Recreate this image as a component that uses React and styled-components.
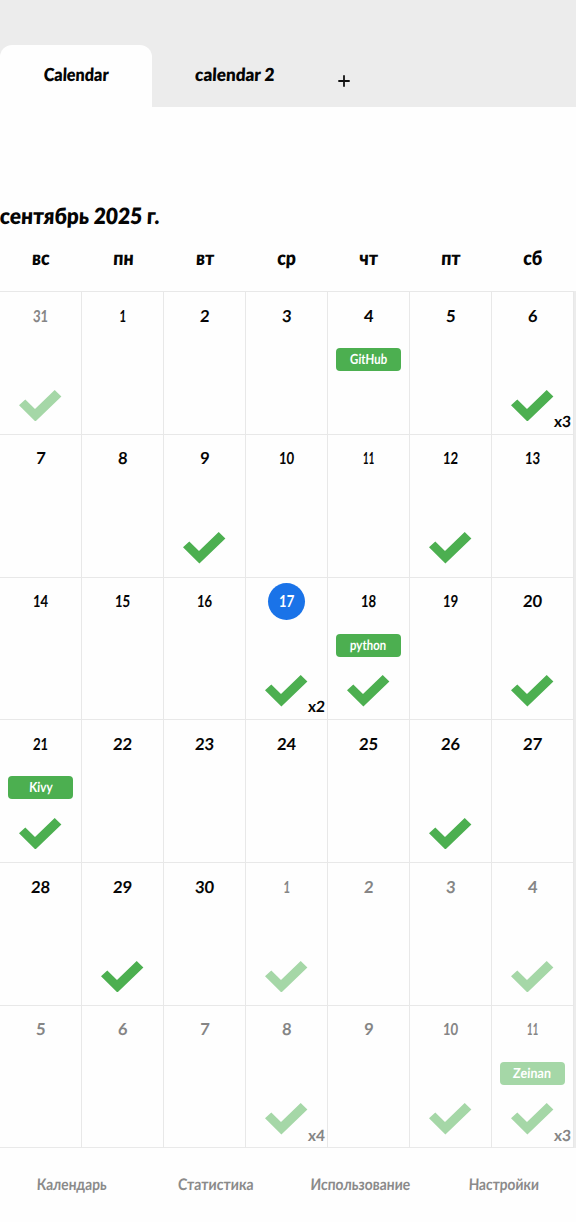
import React from "react";
import styled, { createGlobalStyle } from "styled-components";

const Global = createGlobalStyle`
  *, *::before, *::after { box-sizing: border-box; }
  body { margin: 0; background: #fff; }
`;

const Screen = styled.main`
  width: 576px;
  height: 1222px;
  overflow: hidden;
  display: flex;
  flex-direction: column;
  background: #fefefe;
  color: #050505;
  font-family: Lato, "Noto Sans", sans-serif;
  font-weight: 700;
`;

const Lettering = styled.span`
  display: inline-block;
  white-space: nowrap;
  transform: scaleX(${(p) => p.$stretch || 1}) skewX(-3deg);
  transform-origin: ${(p) => p.$origin || "center"};
`;

const TabBar = styled.header`
  flex: none;
  height: 107px;
  padding-top: 45px;
  display: flex;
  background: #ececec;
`;

const Tab = styled.div`
  width: ${(p) => p.$width}px;
  height: 62px;
  display: flex;
  justify-content: center;
  line-height: 58px;
  font-size: 18px;
  font-weight: 800;
  border-radius: 12px 12px 0 0;
  background: ${(p) => (p.$active ? "#fefefe" : "transparent")};
`;

const AddButton = styled.div`
  width: 52px;
  height: 62px;
  display: flex;
  align-items: center;
  justify-content: center;
  padding-top: 10px;
`;

const Title = styled.h1`
  flex: none;
  margin: 94px 0 0;
  height: 30px;
  line-height: 30px;
  font-size: 22.5px;
  font-weight: 800;
`;

const Weekdays = styled.div`
  flex: none;
  height: 60px;
  display: grid;
  grid-template-columns: repeat(7, 82px);
  text-align: center;
  font-size: 20px;
  font-weight: 800;
  line-height: 52px;
`;

const Month = styled.section`
  flex: none;
  height: 857px;
  display: grid;
  grid-template-columns: repeat(7, 82px) 3px;
  grid-template-rows: repeat(6, 142.75px);
  border-bottom: 1px solid #e9e9e9;
`;

const Edge = styled.div`
  grid-column: 8;
  grid-row: 1 / -1;
  background: #ececec;
`;

const Cell = styled.div`
  position: relative;
  display: flex;
  flex-direction: column;
  align-items: center;
  padding-top: 5.5px;
  border-top: 1.5px solid #e8e8e8;
  border-right: 1.5px solid #e8e8e8;
  color: ${(p) => (p.$muted ? "#858585" : "#050505")};
`;

const DayNumber = styled.div`
  width: 37px;
  height: 37px;
  border-radius: 50%;
  text-align: center;
  line-height: 36px;
  font-size: 16.5px;
  font-weight: 700;
  background: ${(p) => (p.$today ? "#1a73e8" : "transparent")};
  color: ${(p) => (p.$today ? "#fff" : "inherit")};
`;

const EventSlot = styled.div`
  height: 23px;
  margin: 13.5px 0 18.5px;
`;

const EventChip = styled.div`
  width: 65px;
  height: 23px;
  border-radius: 4px;
  text-align: center;
  line-height: 22px;
  font-size: 14px;
  font-weight: 700;
  color: #fff;
  background: ${(p) => (p.$muted ? "#a5d7a7" : "#4caf50")};
`;

const Mark = styled.svg`
  flex: none;
  width: 42.4px;
  height: 31.5px;
  fill: ${(p) => (p.$muted ? "#a5d7a7" : "#4caf50")};
`;

const Count = styled.div`
  position: absolute;
  right: 2px;
  bottom: 4px;
  font-size: 15.5px;
  line-height: 18px;
  font-weight: 700;
`;

const BottomNav = styled.nav`
  flex: 1;
  display: grid;
  grid-template-columns: repeat(4, 144px);
  text-align: center;
  font-size: 16px;
  line-height: 71px;
  font-weight: 700;
  color: #8a8a8a;
`;

const WEEKDAYS = ["вс", "пн", "вт", "ср", "чт", "пт", "сб"];

const EVENTS = {
  4: { label: "GitHub", stretch: 0.82 },
  18: { label: "python", stretch: 0.82 },
  21: { label: "Kivy", stretch: 0.84 },
  41: { label: "Zeinan", stretch: 0.9 },
};

const CHECKS = { 0: 1, 6: 3, 9: 1, 12: 1, 17: 2, 18: 1, 20: 1, 21: 1, 26: 1, 29: 1, 31: 1, 34: 1, 38: 4, 40: 1, 41: 3 };

const NAV = [
  ["Календарь", 0.86],
  ["Статистика", 0.88],
  ["Использование", 0.87],
  ["Настройки", 0.86],
];

// Numbers that contain a one are drawn narrower.
function numberStretch(number) {
  if (number === 11) return 0.6;
  if (number === 1) return 0.7;
  return String(number).includes("1") ? 0.8 : 1;
}

function Day({ index }) {
  const muted = index === 0 || index > 30;
  const number = index === 0 ? 31 : index > 30 ? index - 30 : index;
  const event = EVENTS[index];
  const checks = CHECKS[index];
  return (
    <Cell $muted={muted}>
      <DayNumber $today={index === 17}>
        <Lettering $stretch={numberStretch(number)}>{number}</Lettering>
      </DayNumber>
      <EventSlot>
        {event && (
          <EventChip $muted={muted}>
            <Lettering $stretch={event.stretch}>{event.label}</Lettering>
          </EventChip>
        )}
      </EventSlot>
      {checks && (
        <Mark $muted={muted} viewBox="0 0 42.4 31.5">
          <path d="M0 15.3 6.3 9.4 16 19.1 35.7 0 42.4 6.6 16.4 31.5Z" />
        </Mark>
      )}
      {checks > 1 && (
        <Count>
          <Lettering>x{checks}</Lettering>
        </Count>
      )}
    </Cell>
  );
}

export default function App() {
  return (
    <Screen>
      <Global />
      <TabBar>
        <Tab $active $width={152}><Lettering $stretch={0.9}>Calendar</Lettering></Tab>
        <Tab $width={166}><Lettering $stretch={0.95}>calendar 2</Lettering></Tab>
        <AddButton>
          <svg width="12" height="12" viewBox="0 0 12 12" stroke="#111" strokeWidth="1.8">
            <path d="M6 .3V11.7M.3 6H11.7" />
          </svg>
        </AddButton>
      </TabBar>
      <Title><Lettering $stretch={0.925} $origin="left">сентябрь 2025 г.</Lettering></Title>
      <Weekdays>
        {WEEKDAYS.map((d) => <div key={d}><Lettering $stretch={0.88}>{d}</Lettering></div>)}
      </Weekdays>
      <Month>
        {Array.from({ length: 42 }, (_, i) => <Day key={i} index={i} />)}
        <Edge />
      </Month>
      <BottomNav>
        {NAV.map(([label, stretch]) => (
          <div key={label}><Lettering $stretch={stretch}>{label}</Lettering></div>
        ))}
      </BottomNav>
    </Screen>
  );
}
